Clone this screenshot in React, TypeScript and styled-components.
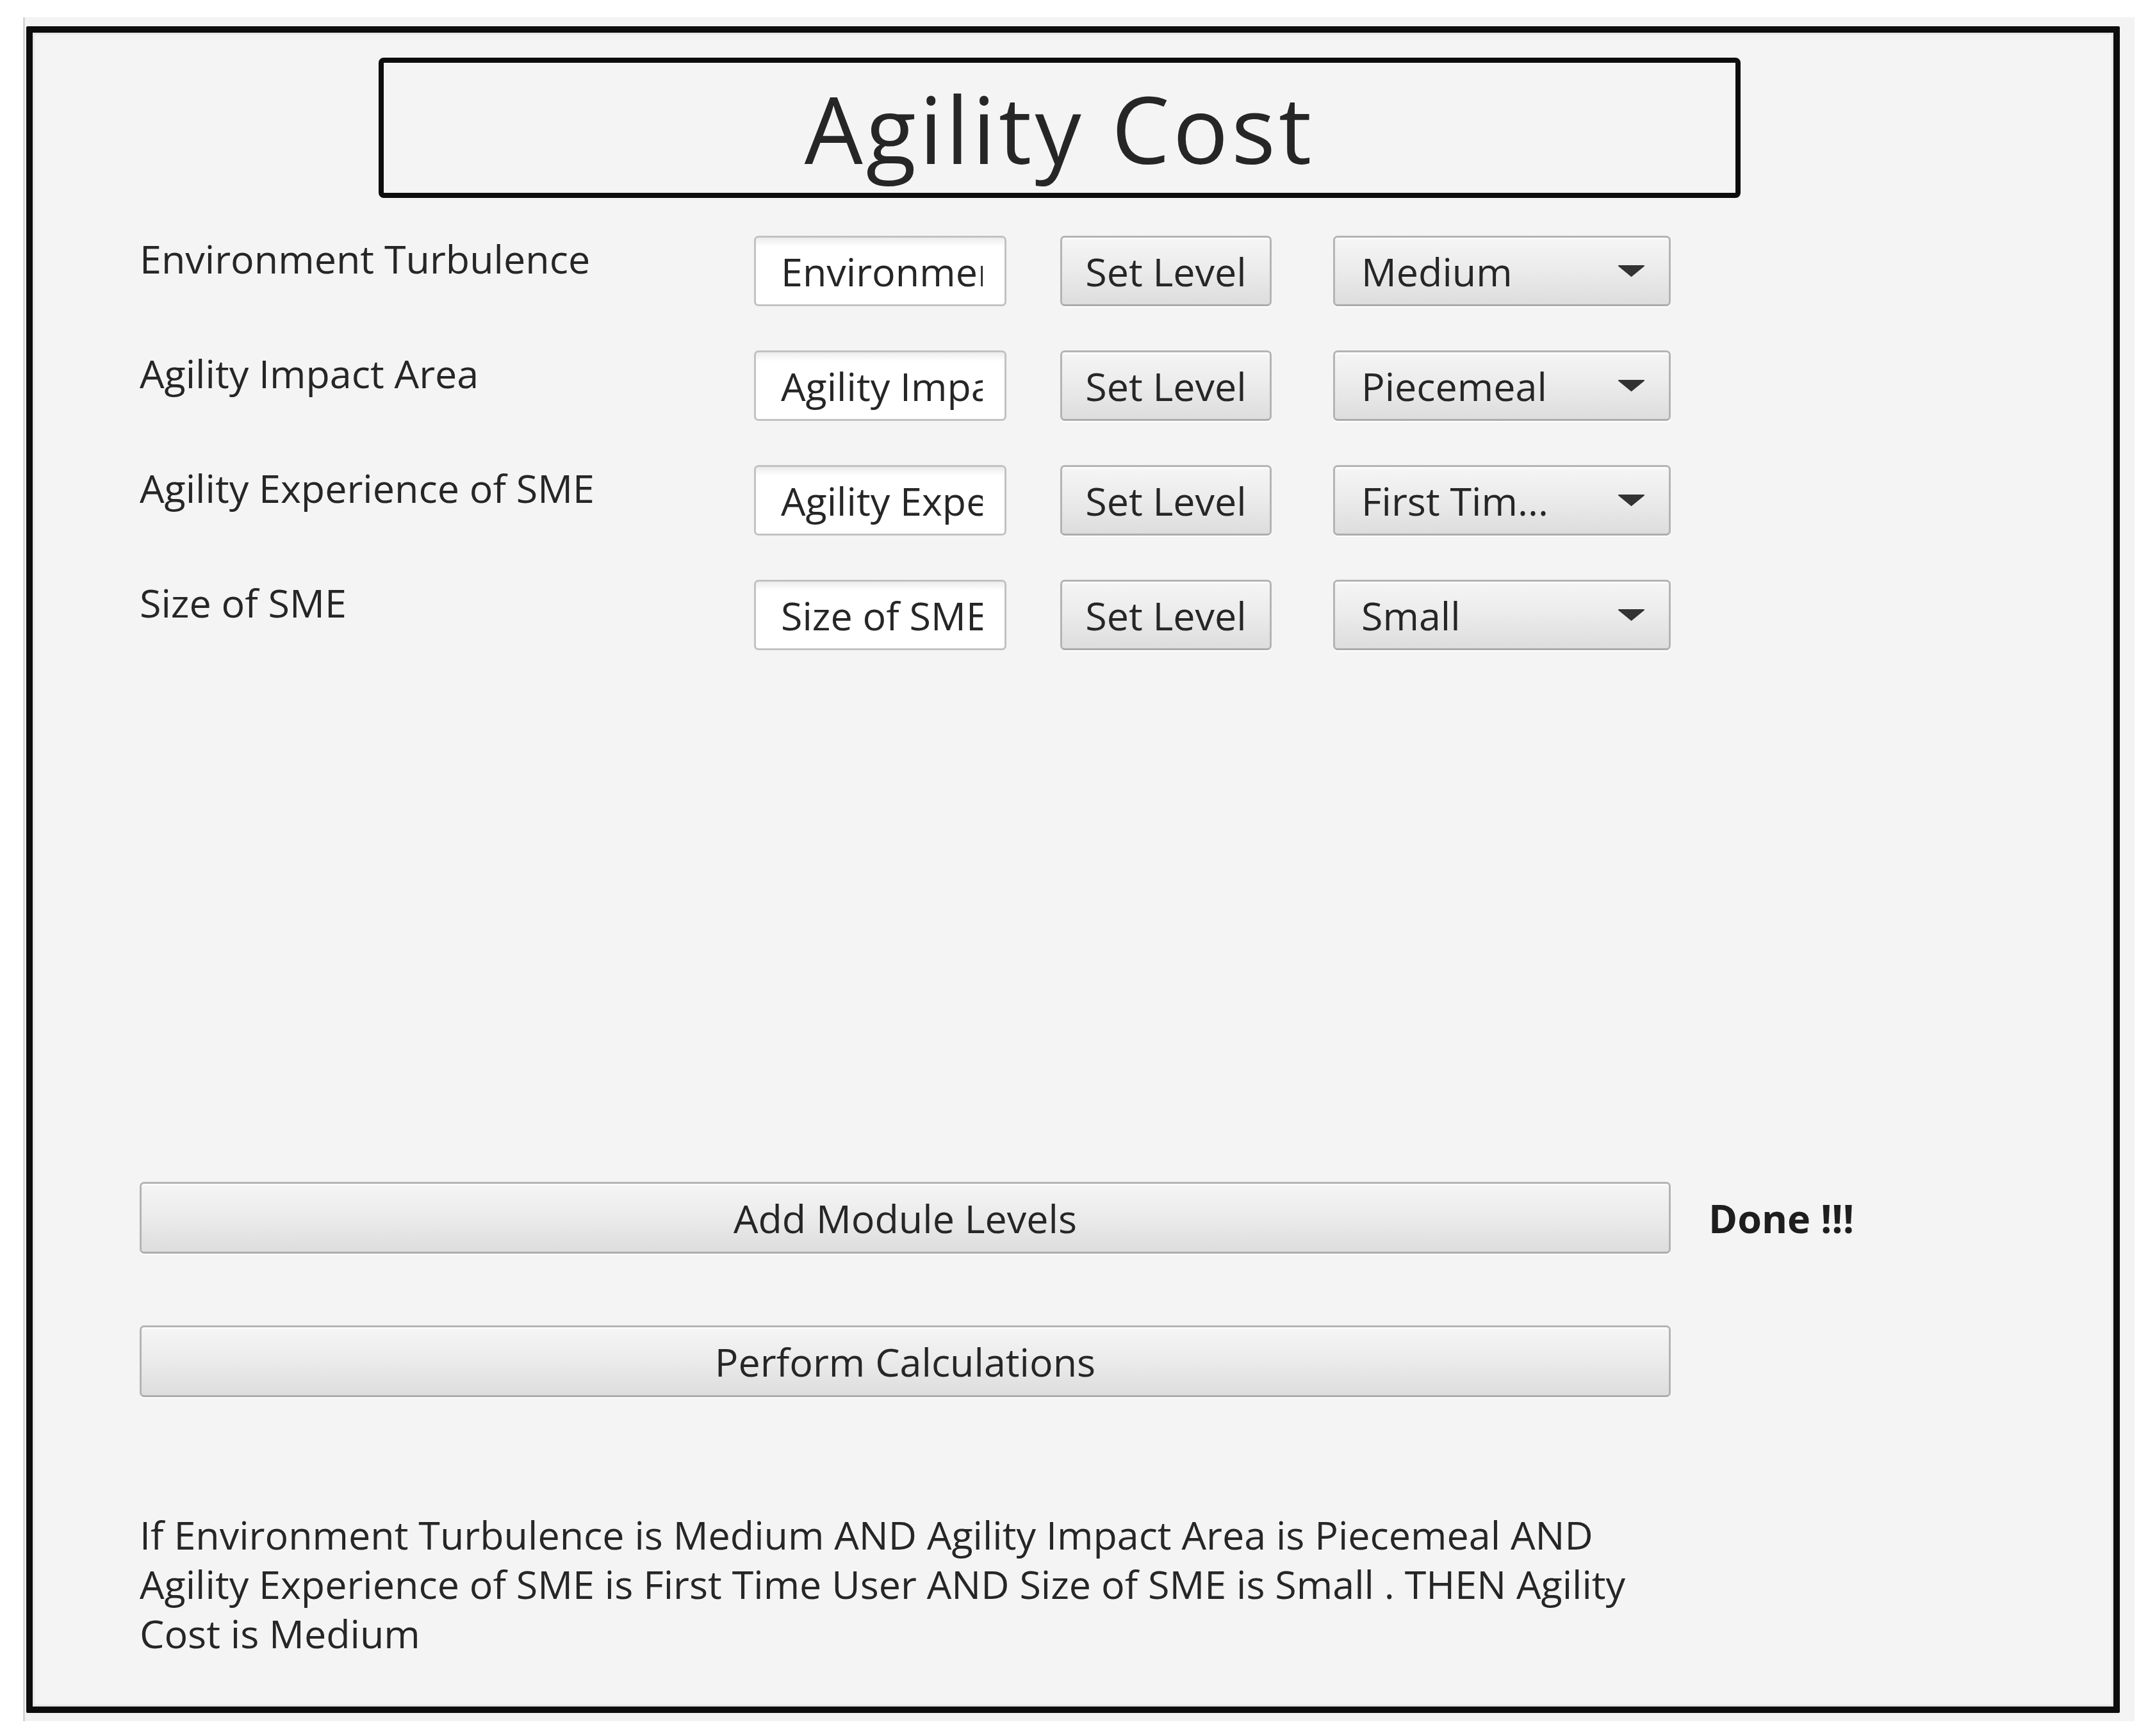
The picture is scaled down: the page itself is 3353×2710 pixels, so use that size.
import styled, { createGlobalStyle } from 'styled-components'

const GlobalStyle = createGlobalStyle`
  html, body {
    margin: 0;
    padding: 0;
    background: #ffffff;
  }
  body {
    font-family: "Open Sans", "Liberation Sans", sans-serif;
    color: #262626;
  }
`

const Window = styled.div`
  margin: 27px 0 0 36px;
  width: 3296px;
  height: 2660px;
  box-sizing: border-box;
  background: #f3f3f3;
  border-left: 3px solid #d6d6d6;
  padding: 14px 0 0 2px;
`

const Frame = styled.div`
  width: 3268px;
  height: 2633px;
  box-sizing: border-box;
  border: 10px solid #0d0d0d;
  border-radius: 2px;
  background: #f4f4f4;
  box-shadow: inset 0 0 0 3px #e6e6e6;
  padding: 39px 0 0 167px;
  display: flex;
  flex-direction: column;
  align-items: flex-start;
`

const TitleBox = styled.div`
  margin-left: 373px;
  width: 2126px;
  height: 219px;
  box-sizing: border-box;
  border: 8px solid #0d0d0d;
  border-radius: 8px;
  display: flex;
  align-items: center;
  justify-content: center;
`

const Title = styled.h1`
  margin: 0;
  font-size: 144px;
  font-weight: 400;
  letter-spacing: 5px;
  line-height: 1;
  color: #262626;
`

const Rows = styled.div`
  margin-top: 59px;
  display: flex;
  flex-direction: column;
  gap: 69px;
`

const Row = styled.div`
  display: flex;
  align-items: flex-start;
  height: 110px;
`

const Label = styled.div`
  width: 959px;
  font-size: 61px;
  line-height: 72px;
  white-space: nowrap;
`

const Field = styled.input`
  width: 394px;
  height: 110px;
  box-sizing: border-box;
  border: 3px solid #c2c2c2;
  border-radius: 7px;
  background: linear-gradient(to bottom, #ececec 0px, #ffffff 14px, #ffffff 100%);
  padding: 0 34px 0 39px;
  font-family: "Open Sans", "Liberation Sans", sans-serif;
  font-size: 61px;
  color: #262626;
  outline: none;
`

const Button = styled.button<{ $width: number }>`
  width: ${p => p.$width}px;
  height: 110px;
  box-sizing: border-box;
  border: 3px solid #b4b4b4;
  border-bottom-color: #acacac;
  border-radius: 7px;
  background: linear-gradient(to bottom, #f5f5f5 0%, #ececec 45%, #dddddd 100%);
  box-shadow: inset 0 3px 0 #fbfbfb, 0 2px 0 rgba(255, 255, 255, 0.9);
  font-family: "Open Sans", "Liberation Sans", sans-serif;
  font-size: 61px;
  color: #262626;
  padding: 0;
  display: flex;
  align-items: center;
  justify-content: center;
  white-space: nowrap;
`

const SetLevel = styled(Button)`
  margin-left: 84px;
`

const Combo = styled(Button)`
  margin-left: 96px;
  justify-content: space-between;
  padding: 0 38px 0 41px;
`

const Arrow = () => (
  <svg width="41" height="18" viewBox="0 0 41 18">
    <polygon points="1,1 40,1 20.5,17" fill="#333333" stroke="#333333" strokeWidth="2" strokeLinejoin="round" />
  </svg>
)

const ActionRow = styled.div<{ $top: number }>`
  margin-top: ${p => p.$top}px;
  display: flex;
  align-items: center;
  gap: 59px;
`

const WideButton = styled(Button)`
  height: 112px;
`

const Status = styled.span`
  font-size: 61px;
  font-weight: 700;
  color: #1e1e1e;
  white-space: nowrap;
`

const Rule = styled.p`
  margin: 176px 0 0 0;
  font-size: 61px;
  line-height: 77px;
  white-space: nowrap;
`

const rows = [
  { label: 'Environment Turbulence', value: 'Environment Turbulence', level: 'Medium' },
  { label: 'Agility Impact Area', value: 'Agility Impact Area', level: 'Piecemeal' },
  { label: 'Agility Experience of SME', value: 'Agility Experience of SME', level: 'First Tim...' },
  { label: 'Size of SME', value: 'Size of SME', level: 'Small' }
]

export default function App() {
  return (
    <>
      <GlobalStyle />
      <Window>
        <Frame>
          <TitleBox>
            <Title>Agility Cost</Title>
          </TitleBox>
          <Rows>
            {rows.map(row => (
              <Row key={row.label}>
                <Label>{row.label}</Label>
                <Field readOnly value={row.value} />
                <SetLevel $width={330}>Set Level</SetLevel>
                <Combo $width={527}>
                  <span>{row.level}</span>
                  <Arrow />
                </Combo>
              </Row>
            ))}
          </Rows>
          <ActionRow $top={830}>
            <WideButton $width={2390}>Add Module Levels</WideButton>
            <Status>Done !!!</Status>
          </ActionRow>
          <ActionRow $top={112}>
            <WideButton $width={2390}>Perform Calculations</WideButton>
          </ActionRow>
          <Rule>
            If Environment Turbulence is Medium AND Agility Impact Area is Piecemeal AND
            <br />
            Agility Experience of SME is First Time User AND Size of SME is Small . THEN Agility
            <br />
            Cost is Medium
          </Rule>
        </Frame>
      </Window>
    </>
  )
}
